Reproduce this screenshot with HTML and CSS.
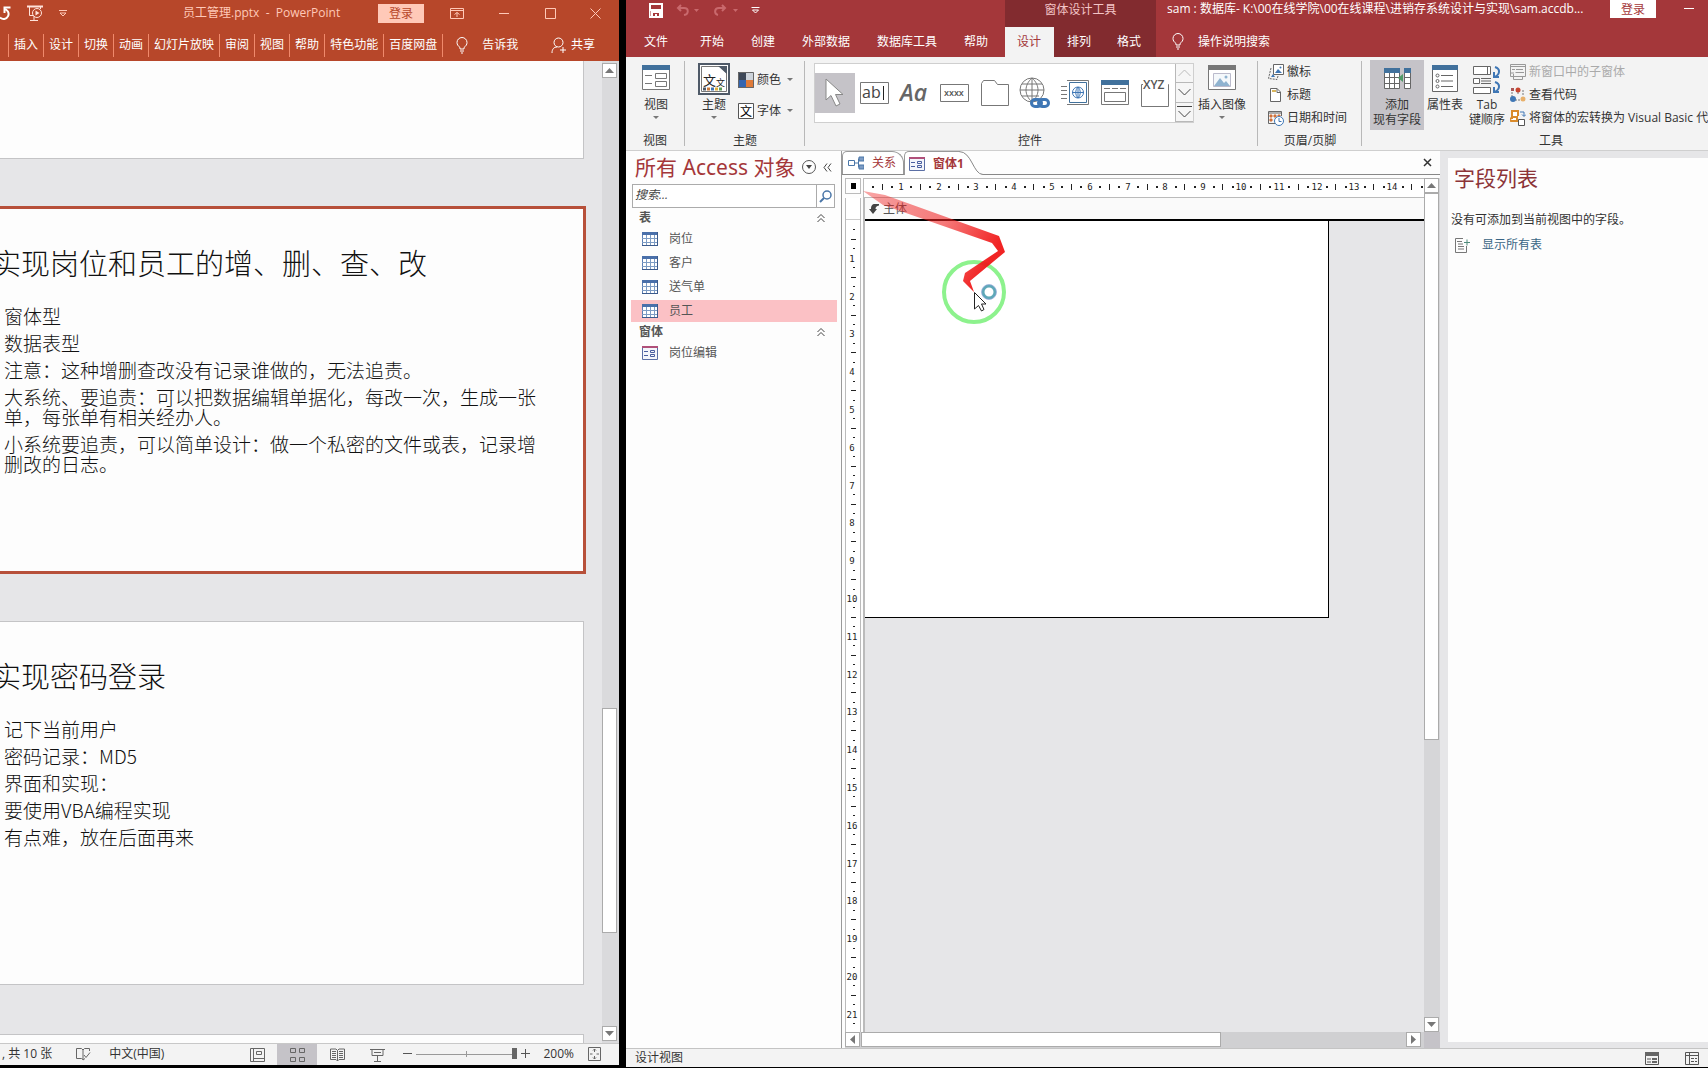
FILE: index.html
```html
<!DOCTYPE html>
<html lang="zh-CN">
<head>
<meta charset="utf-8">
<title>员工管理.pptx / sam 数据库</title>
<link rel="stylesheet" href="styles.css">
</head>
<body>
<div class="desktop">

<section class="ppt" aria-label="PowerPoint">
  <header class="ppt-head">
    <div class="ppt-title-row">
      <div class="ppt-qat">
        <button aria-label="重复"><svg width="12" height="16"><path d="M0 12.500A5 5 0 1 0 4 4M10.500 2.500H4.500V8" fill="none" stroke="#fff" stroke-width="2"/></svg></button>
        <button aria-label="放映"><svg width="16" height="16" fill="none" stroke="#ffe3da"><path d="M0 1.500H16" stroke-width="2"/><path d="M2.500 2V10.500H6M13.500 2V4M7 11V15M3 15.500H11"/><circle cx="10" cy="8" r="4.500"/><path d="M8.500 5.500V10.500L12.500 8Z" fill="#ffe3da" stroke="none"/></svg></button>
        <button aria-label="自定义"><svg width="10" height="8" fill="none" stroke="#ffc9b8"><path d="M1 1.500H9M2 4L5 7L8 4Z"/></svg></button>
      </div>
      <h1 class="ppt-title">员工管理.pptx&nbsp; -&nbsp; PowerPoint</h1>
      <button class="ppt-login">登录</button>
      <div class="ppt-win">
        <button aria-label="功能区显示选项"><svg width="14" height="11" fill="none" stroke="#ffc9b8"><path d="M.5.500H13.500V10.500H.5ZM.5 2.500H13.500M7 9V4.500M4.500 6.500L7 4.500L9.500 6.500"/></svg></button>
        <button aria-label="最小化"><svg width="12" height="11" stroke="#ffc9b8"><path d="M1 5.500H11"/></svg></button>
        <button aria-label="最大化"><svg width="11" height="11" fill="none" stroke="#ffc9b8"><path d="M.5.500H10.500V10.500H.5Z"/></svg></button>
        <button aria-label="关闭"><svg width="11" height="11" stroke="#ffc9b8"><path d="M.5.500L10.500 10.500M10.500.500L.5 10.500"/></svg></button>
      </div>
    </div>
    <nav class="ppt-tabs">
      <button class="cut" aria-label="绘图"></button><button>插入</button><button>设计</button><button>切换</button><button>动画</button><button>幻灯片放映</button><button>审阅</button><button>视图</button><button>帮助</button><button>特色功能</button><button>百度网盘</button>
      <button class="tell"><svg width="12" height="17" fill="none" stroke="#fff"><path d="M4 12V10.500C2 9 1 7.500 1 5.500A5 5 0 0 1 11 5.500C11 7.500 10 9 8 10.500V12ZM4 14H8M5 16H7"/></svg>告诉我</button>
      <button class="share"><svg width="16" height="17" fill="none" stroke="#fff"><circle cx="7.500" cy="5.500" r="4.500"/><path d="M1 16C1 12 3 10 6 10M9 13H15M12 10V16"/></svg>共享</button>
    </nav>
  </header>
  <main class="ppt-main">
    <div class="slides">
      <article class="slide slide-top"></article>
      <article class="slide selected">
        <h2>实现岗位和员工的增、删、查、改</h2>
        <p>窗体型</p>
        <p>数据表型</p>
        <p>注意：这种增删查改没有记录谁做的，无法追责。</p>
        <p>大系统、要追责：可以把数据编辑单据化，每改一次，生成一张<br>单，每张单有相关经办人。</p>
        <p>小系统要追责，可以简单设计：做一个私密的文件或表，记录增<br>删改的日志。</p>
      </article>
      <article class="slide">
        <h2>实现密码登录</h2>
        <p>记下当前用户</p>
        <p>密码记录：MD5</p>
        <p>界面和实现：</p>
        <p>要使用VBA编程实现</p>
        <p>有点难，放在后面再来</p>
      </article>
      <article class="slide"></article>
    </div>
    <div class="vbar ppt-bar">
      <button class="sbtn" aria-label="向上"><svg width="9" height="5"><path d="M0 5L4.500 0L9 5Z" fill="#777"/></svg></button>
      <div class="track"><div class="gap-a"></div><div class="thumb"></div><div class="gap-b"></div></div>
      <button class="sbtn" aria-label="向下"><svg width="9" height="5"><path d="M0 0L4.500 5L9 0Z" fill="#777"/></svg></button>
    </div>
  </main>
  <footer class="ppt-status">
    <span>, 共 10 张</span>
    <button class="spell" aria-label="拼写检查"><svg width="15" height="14" fill="none" stroke="#666"><path d="M7 12.500L5.500 11.500H.5V1.500H5.500L7 3L8.500 1.500H13.500V4M7 3V13L9 11.500M8 8L10 10.500L14 5.500"/></svg></button>
    <span>中文(中国)</span>
    <div class="views">
      <button aria-label="普通"><svg width="15" height="14" fill="none" stroke="#666"><path d="M.5.500H14.500V13.500H.5ZM3.500.500V13.500M3.500 10.500H14.500M6.500 3.500H11.500V6.500H6.500Z"/></svg></button>
      <button class="on" aria-label="幻灯片浏览"><svg width="15" height="14" fill="none" stroke="#666"><path d="M.5.500H5.500V4.500H.5ZM9.500.500H14.500V4.500H9.500ZM.5 9.500H5.500V13.500H.5ZM9.500 9.500H14.500V13.500H9.500Z"/></svg></button>
      <button aria-label="阅读"><svg width="15" height="14" fill="none" stroke="#666"><path d="M7.500 13V2.500L6 1H.5V11.500H6L7.500 13L9 11.500H14.500V1H9L7.500 2.500M2 3.500H6M2 5.500H6M2 7.500H6M2 9.500H6M9 3.500H13M9 5.500H13M9 7.500H13M9 9.500H13"/></svg></button>
      <button aria-label="放映"><svg width="15" height="14" fill="none" stroke="#666"><path d="M0 1.500H15M2 1.500V7.500H13V1.500M4 4.500H11M7.500 8V13M4 13.500H11"/></svg></button>
    </div>
    <button class="zbtn" aria-label="缩小"><svg width="9" height="9" stroke="#555"><path d="M0 4.500H9"/></svg></button>
    <input class="zoom" type="range" min="0" max="100" value="100" aria-label="缩放">
    <button class="zbtn" aria-label="放大"><svg width="9" height="9" stroke="#555"><path d="M0 4.500H9M4.500 0V9"/></svg></button>
    <span class="pct">200%</span>
    <button class="fit" aria-label="适应窗口"><svg width="13" height="14" fill="none" stroke="#666"><path d="M.5.500H12.500V13.500H.5ZM6.500 2V5M6.500 9V12M2 7H4.500M8.500 7H11M5 3.500L6.500 2L8 3.500M5 10.500L6.500 12L8 10.500"/></svg></button>
  </footer>
</section>

<section class="acc" aria-label="Access">
  <header class="acc-head">
    <div class="head-left">
      <div class="acc-qat">
        <button aria-label="保存"><svg width="14" height="15"><path d="M0 0H14V15H0Z" fill="#fff"/><path d="M2 2H12V6H2ZM4 10H10V13H8V11H6V13H4ZM1.500 8H2V13H1.500Z" fill="#a4373a"/></svg></button>
        <button class="dim" aria-label="撤消"><svg width="24" height="12" fill="none" stroke="#c9696d" stroke-width="2"><path d="M2 4H8C13 4 13 10 8 11M5 1L2 4L5 7"/><path d="M18 5H23L20.500 8Z" fill="#c9696d" stroke="none"/></svg></button>
        <button class="dim" aria-label="恢复"><svg width="25" height="12" fill="none" stroke="#c9696d" stroke-width="2"><path d="M12 4H6C1 4 1 10 5 11M9 1L12 4L9 7"/><path d="M20 5H25L22.500 8Z" fill="#c9696d" stroke="none"/></svg></button>
        <button aria-label="自定义"><svg width="9" height="8" fill="none" stroke="#fff"><path d="M.5 1.500H8.500M1.500 4L4.500 7L7.500 4Z"/></svg></button>
      </div>
      <nav class="acc-tabs"><button class="file">文件</button><button>开始</button><button>创建</button><button>外部数据</button><button>数据库工具</button><button>帮助</button></nav>
    </div>
    <div class="head-ctx">
      <div class="ctx-title">窗体设计工具</div>
      <nav class="acc-tabs"><button class="active">设计</button><button>排列</button><button>格式</button></nav>
    </div>
    <div class="head-right">
      <div class="acc-title-row">
        <h1>sam : 数据库- K:\00在线学院\00在线课程\进销存系统设计与实现\sam.accdb...</h1>
        <button class="acc-login">登录</button>
        <button class="acc-min" aria-label="最小化"><svg width="10" height="11" stroke="#fff"><path d="M0 4.500H10"/></svg></button>
      </div>
      <button class="acc-tell"><svg width="12" height="17" fill="none" stroke="#fff"><path d="M4 12V10.500C2 9 1 7.500 1 5.500A5 5 0 0 1 11 5.500C11 7.500 10 9 8 10.500V12ZM4 14H8M5 16H7"/></svg>操作说明搜索</button>
    </div>
  </header>

  <div class="ribbon">
    <div class="group g-view">
      <div class="gbody">
        <button class="big"><span class="ico"><svg width="28" height="26" fill="none" stroke="#777"><path d="M.5.500H27.500V24.500H.5Z" fill="#fff"/><path d="M0 0H28V5H0Z" fill="#41719c" stroke="none"/><path d="M3 10.500H10M13.500 8.500H24.500V13.500H13.500ZM3 18.500H10M13.500 16.500H24.500V21.500H13.500Z"/></svg></span>视图<i class="caret"></i></button>
      </div>
      <div class="glabel">视图</div>
    </div>
    <div class="group g-theme">
      <div class="gbody">
        <button class="big"><span class="ico"><svg width="32" height="32" fill="none"><path d="M1 1H31V31H1Z" fill="#fff" stroke="#4f5a68" stroke-width="2"/><path d="M3.500 3.500H22L28.500 10V28.500H3.500Z" stroke="#777"/><path d="M20 3H29V11Z" fill="#4f5a68"/><text x="5" y="22" font-size="13" fill="#222">文</text><text x="18" y="23" font-size="9" fill="#222">文</text><path d="M5 26H8" stroke="#4f5a68" stroke-width="3"/><path d="M9 26H12" stroke="#c97a3c" stroke-width="3"/><path d="M13 26H16" stroke="#3f77b5" stroke-width="3"/><path d="M17 26H20" stroke="#e0b03c" stroke-width="3"/><path d="M21 26H24" stroke="#5a9c5a" stroke-width="3"/></svg></span>主题<i class="caret"></i></button>
        <div class="stack two">
          <button class="small"><svg width="16" height="16"><path d="M0 0H8V8H0Z" fill="#3c4656"/><path d="M8 0H16V8H8Z" fill="#cdd3da"/><path d="M0 8H8V16H0Z" fill="#3465b0"/><path d="M8 8H16V16H8Z" fill="#e07b39"/><path d="M.5.500H15.500V15.500H.5Z" fill="none" stroke="#666"/></svg>颜色<i class="caret"></i></button>
          <button class="small"><svg width="16" height="16"><path d="M.5.500H15.500V15.500H.5Z" fill="#fff" stroke="#555"/><text x="2" y="13" font-size="12" fill="#000">文</text></svg>字体<i class="caret"></i></button>
        </div>
      </div>
      <div class="glabel">主题</div>
    </div>
    <div class="group g-ctl">
      <div class="gbody">
        <div class="gallery">
          <button class="on" aria-label="选择"><svg width="20" height="30"><path d="M1 1V22L6 17.500L11 28L15 26L10.500 16.500H18Z" fill="#fff" stroke="#888"/></svg></button>
          <button aria-label="文本框"><svg width="30" height="22"><path d="M.5.500H28.500V21.500H.5Z" fill="#fff" stroke="#777"/><text x="2" y="16" font-size="16" fill="#444">ab</text><path d="M23.500 4V18" stroke="#222"/></svg></button>
          <button aria-label="标签"><svg width="32" height="28"><text x="1" y="22" font-size="23" font-style="italic" font-weight="600" fill="#666">Aa</text></svg></button>
          <button aria-label="按钮"><svg width="30" height="18"><path d="M.5.500H28.500V17.500H.5Z" fill="#fff" stroke="#777"/><text x="4" y="12" font-size="9" font-weight="600" fill="#555">xxxx</text></svg></button>
          <button aria-label="选项卡控件"><svg width="28" height="26"><path d="M.5 25.500V3.500L2.500.500H13.500L16.500 4.500H27.500V25.500Z" fill="#fff" stroke="#777"/></svg></button>
          <button aria-label="超链接"><svg width="32" height="32" fill="none" stroke="#777"><circle cx="13" cy="13" r="12"/><path d="M13 1V25M1 13H25M3 7H23M3 19H20M13 1C5 8 5 18 13 25M13 1C21 8 21 18 13 25"/><g stroke="#3f77b5" stroke-width="3"><rect x="12.500" y="22.500" width="10" height="7" rx="3.500" fill="none"/><rect x="19.500" y="22.500" width="10" height="7" rx="3.500"/></g></svg></button>
          <button aria-label="Web 浏览器"><svg width="28" height="26" fill="none" stroke="#777"><path d="M8.500 2.500H25.500V22.500H8.500Z" stroke="#41719c"/><path d="M6 .5H27.500V24.500H6M0 6.500H6M0 10.500H6M0 14.500H6M0 18.500H6"/><g stroke="#3f77b5"><circle cx="17" cy="12.500" r="5.500"/><path d="M17 7V18M11 12.500H23M17 7C14 10 14 15 17 18M17 7C20 10 20 15 17 18"/></g></svg></button>
          <button aria-label="导航控件"><svg width="28" height="26" fill="none" stroke="#777"><path d="M.5.500H27.500V24.500H.5Z"/><path d="M0 0H28V5H0Z" fill="#41719c" stroke="none"/><path d="M3 8.500H9M11 8.500H17M19 8.500H25M3.500 12.500H24.500V21.500H3.500Z"/></svg></button>
          <button aria-label="选项组"><svg width="28" height="32"><path d="M2 7.500H.5V29.500H27.500V7.500H27" fill="none" stroke="#777"/><text x="2" y="12" font-size="12" font-weight="600" fill="#555">XYZ</text></svg></button>
          <div class="gscroll">
            <button aria-label="上一行"><svg width="13" height="8" fill="none" stroke="#bbb"><path d="M.5 7L6.500 1L12.500 7"/></svg></button>
            <button aria-label="下一行"><svg width="13" height="8" fill="none" stroke="#444"><path d="M.5 1L6.500 7L12.500 1"/></svg></button>
            <button aria-label="更多"><svg width="15" height="14" fill="none" stroke="#444"><path d="M0 1.500H15M1.500 6L7.500 12L13.500 6"/></svg></button>
          </div>
        </div>
        <button class="big insert"><span class="ico"><svg width="28" height="26" fill="none"><path d="M.5.500H27.500V24.500H.5Z" fill="#fff" stroke="#777"/><path d="M0 0H28V5H0Z" fill="#777"/><path d="M5.500 8.500H22.500V21.500H5.500Z" stroke="#bbc" fill="#f4f8fb"/><path d="M6 21L12 13L16 18L18 16L22 21Z" fill="#8fb3d0"/><circle cx="18" cy="12" r="1.500" fill="#8fb3d0"/></svg></span>插入图像<i class="caret"></i></button>
      </div>
      <div class="glabel">控件</div>
    </div>
    <div class="group g-hf">
      <div class="gbody">
        <div class="stack">
          <button class="small"><svg width="16" height="16" fill="none" stroke="#666"><path d="M5.500.500H15.500V10.500H5.500Z" fill="#fff"/><path d="M7 9L10 5L12 7L14 9Z" fill="#3f77b5" stroke="none"/><circle cx="12.500" cy="3.500" r="1" fill="#3f77b5" stroke="none"/><path d="M3 4L.5 14.500L9 15.500L10 12" stroke-dasharray="2 1"/><path d="M3 13L5 10L7 13Z" fill="#3f77b5" stroke="none"/></svg>徽标</button>
          <button class="small"><svg width="16" height="16" fill="none" stroke="#666"><path d="M2.500 1.500H9L12.500 5V14.500H2.500Z" fill="#fff"/><path d="M9 1.500V5.500H12.500"/><path d="M4 3H8V5H4Z" fill="#d8b45a" stroke="none"/></svg>标题</button>
          <button class="small"><svg width="16" height="16" fill="none" stroke="#666"><path d="M.5 1.500H13.500V6M.5 1.500V13.500H7M0 3H14"/><path d="M2 5H4V7H2ZM6 5H8V7H6ZM2 9H4V11H2ZM10 5H12V6H10Z" fill="#d0703a" stroke="#d0703a"/><circle cx="11" cy="11" r="4.500" fill="#fff" stroke="#3f77b5"/><path d="M11 8V11.500H13.500" stroke="#3f77b5"/></svg>日期和时间</button>
        </div>
      </div>
      <div class="glabel">页眉/页脚</div>
    </div>
    <div class="group g-tool">
      <div class="gbody">
        <button class="big pressed"><span class="ico"><svg width="27" height="22" fill="none" stroke="#666"><path d="M.5.500H15.500V20.500H.5ZM5.500 4V20M10.500 4V20M0 9.500H16M0 15.500H16" fill="#fff"/><path d="M0 0H16V5H0Z" fill="#41719c" stroke="none"/><path d="M20.500.500H26.500V20.500H20.500ZM20 9.500H27M20 15.500H27" fill="#fff"/><path d="M20 0H27V5H20Z" fill="#41719c" stroke="none"/><path d="M14 10L19 6V14Z" fill="#4f9a66" stroke="none"/></svg></span>添加<br>现有字段</button>
        <button class="big"><span class="ico"><svg width="26" height="28" fill="none" stroke="#666"><path d="M.5.500H25.500V26.500H.5Z" fill="#fff"/><path d="M0 0H26V5H0Z" fill="#41719c" stroke="none"/><circle cx="5.500" cy="10.500" r="1.500"/><circle cx="5.500" cy="16" r="1.500"/><circle cx="5.500" cy="21.500" r="1.500"/><path d="M9 10.500H21M9 16H21M9 21.500H21"/></svg></span>属性表</button>
        <button class="big tab"><span class="ico"><svg width="28" height="30" fill="none" stroke="#666"><path d="M.5 1.500H17.500V9.500H.5ZM14.500 1.500V9.500M.5 13.500H6.500V18.500H.5ZM8 13.500H18M8 16H18M8 18.500H18M.5 22.500H17.500V28.500H.5Z" fill="#fff"/><g stroke="#3f77b5" stroke-width="2"><path d="M22 2C28 4 27 10 21 12M21 7V12H26M22 17C28 19 27 25 21 27M21 22V27H26"/></g></svg></span>Tab<br>键顺序</button>
        <div class="stack">
          <button class="small" disabled><svg width="16" height="16" fill="none" stroke="#999"><path d="M.5.500H15.500V12.500H.5ZM0 2.500H16M2 5.500H5M6 5.500H13M5.500 8.500H14M0 9H4M3.500 10V15.500H12.500V13"/></svg>新窗口中的子窗体</button>
          <button class="small"><svg width="16" height="16"><path d="M2 5V11M5 13H11M8 5V8M13 3V9" stroke="#777" stroke-dasharray="2 1"/><circle cx="8" cy="3" r="2.500" fill="#c8452f"/><circle cx="3" cy="12" r="3" fill="#3f77b5"/><circle cx="13" cy="12" r="2.500" fill="#e8b06a"/><path d="M1 1H4V4H1Z" fill="#a55"/></svg>查看代码</button>
          <button class="small"><svg width="16" height="16" fill="none"><path d="M2 9V1H8V6M0 9L3 7H7V11H1Z" fill="#fff" stroke="#d98a2b" stroke-width="2"/><path d="M10 2H14V6M12 4.500L14 6.500L16 4.500" stroke="#3f77b5"/><path d="M8.500 9.500H14.500V15.500H8.500Z" fill="#fff" stroke="#555"/></svg>将窗体的宏转换为 Visual Basic 代码</button>
        </div>
      </div>
      <div class="glabel">工具</div>
    </div>
  </div>

  <div class="acc-body">
    <aside class="nav">
      <div class="nav-head"><h2>所有 Access 对象</h2>
        <button aria-label="选择类别"><svg width="14" height="14"><circle cx="7" cy="7" r="6.500" fill="none" stroke="#555"/><path d="M4 5H10L7 9Z" fill="#444"/></svg></button>
        <button class="fold" aria-label="折叠"><svg width="9" height="9" fill="none" stroke="#444"><path d="M4 .5L1 4.500L4 8.500M8 .5L5 4.500L8 8.500"/></svg></button>
      </div>
      <div class="search"><input type="text" placeholder="搜索..." aria-label="搜索"><button aria-label="搜索"><svg width="13" height="13" fill="none" stroke="#4a76a8"><circle cx="8" cy="5" r="4" stroke-width="1.500"/><path d="M5 8L1 12" stroke-width="2"/></svg></button></div>
      <button class="cat">表<svg width="8" height="9" fill="none" stroke="#444"><path d="M.5 4L4 .5L7.500 4M.5 8L4 4.500L7.500 8"/></svg></button>
      <ul>
        <li><button><svg class="tbl"><use href="#i-table"/></svg>岗位</button></li>
        <li><button><svg class="tbl"><use href="#i-table"/></svg>客户</button></li>
        <li><button><svg class="tbl"><use href="#i-table"/></svg>送气单</button></li>
        <li><button class="on"><svg class="tbl"><use href="#i-table"/></svg>员工</button></li>
      </ul>
      <button class="cat">窗体<svg width="8" height="9" fill="none" stroke="#444"><path d="M.5 4L4 .5L7.500 4M.5 8L4 4.500L7.500 8"/></svg></button>
      <ul><li><button><svg class="tbl"><use href="#i-form"/></svg>岗位编辑</button></li></ul>
    </aside>

    <main class="doc">
      <div class="doc-tabs">
        <button class="dtab"><svg width="16" height="14" fill="none" stroke="#4a76a8"><path d="M.5 4.500H6.500V9.500H.5ZM7 7H10.500V2.500M10.500 7V11.500"/><path d="M11 1H16V5H11ZM11 9H16V13H11Z" fill="#7d9cc4" stroke="#4a76a8"/></svg>关系</button>
        <button class="dtab cur"><svg class="tbl"><use href="#i-form"/></svg><span>窗体1</span><svg class="slope" width="24" height="24"><path d="M0 .5C13 .5 14 23.500 24 23.500V24H0Z" fill="#fff"/><path d="M0 .5C13 .5 14 23.500 24 23.500" fill="none" stroke="#888"/></svg></button>
        <button class="dclose" aria-label="关闭"><svg width="9" height="9" stroke="#333" stroke-width="1.500"><path d="M1 1L8 8M8 1L1 8"/></svg></button>
      </div>
      <div class="design">
        <button class="corner" aria-label="窗体选择器"></button>
        <svg class="ruler-h" id="rulerH"></svg>
        <div class="ruler-col"><div class="sec-sel"></div><svg class="ruler-v" id="rulerV"></svg></div>
        <div class="canvas">
          <div class="sec-head"><svg width="10" height="10"><path d="M0 5L4 10L8 5H6.500C6.500 3 7.500 2 10 1.500V0H6C3 0 2 2 2 5Z" fill="#444"/></svg>主体</div>
          <div class="form-page"></div>
        </div>
        <div class="vbar">
          <button class="sbtn" aria-label="向上"><svg width="9" height="5"><path d="M0 5L4.500 0L9 5Z" fill="#777"/></svg></button>
          <div class="track"><div class="thumb t-doc"></div><div class="rest-doc"></div></div>
          <button class="sbtn" aria-label="向下"><svg width="9" height="5"><path d="M0 0L4.500 5L9 0Z" fill="#777"/></svg></button>
        </div>
        <div class="hbar">
          <button class="sbtn" aria-label="向左"><svg width="5" height="9"><path d="M5 0L0 4.500L5 9Z" fill="#777"/></svg></button>
          <div class="track"><div class="thumb"></div><div class="rest"></div></div>
          <button class="sbtn" aria-label="向右"><svg width="5" height="9"><path d="M0 0L5 4.500L0 9Z" fill="#777"/></svg></button>
        </div>
        <div class="bar-corner"></div>
      </div>
    </main>

    <aside class="fields">
      <div class="fields-in">
        <h2>字段列表</h2>
        <p>没有可添加到当前视图中的字段。</p>
        <a href="#"><svg width="15" height="15" fill="none" stroke="#777"><path d="M8 .5H.5V14.500H11.500V8M3 3.500H7M3 6H8M3 8.500H9M3 11H9M2 3.500H3"/><path d="M9 4.500H15M12 1.500V7.500" stroke="#4f8a7a"/></svg>显示所有表</a>
      </div>
    </aside>
  </div>

  <footer class="acc-status"><span>设计视图</span>
    <button aria-label="窗体视图"><svg width="14" height="13" fill="none" stroke="#555"><path d="M.5.500H13.500V12.500H.5ZM2 7H6M2 10H6"/><path d="M0 0H14V4H0ZM7 6H12V8H7ZM7 9H12V11H7Z" fill="#666" stroke="none"/></svg></button>
    <button aria-label="布局视图"><svg width="14" height="13" fill="none" stroke="#555"><path d="M.5.500H13.500V12.500H.5ZM0 3.500H14M4.500 0V13M6 6.500H9M10 6.500H12M6 9.500H9M10 9.500H12"/></svg></button>
  </footer>
</section>
</div>

<svg class="pointer" width="160" height="150" viewBox="860 185 160 150">
  <defs><linearGradient id="trail" gradientUnits="userSpaceOnUse" x1="863" y1="190" x2="990" y2="260"><stop offset="0" stop-color="#f02020" stop-opacity=".4"/><stop offset=".6" stop-color="#f02020" stop-opacity=".6"/><stop offset="1" stop-color="#f01818" stop-opacity=".95"/></linearGradient></defs>
  <circle cx="974" cy="292" r="30" fill="none" stroke="#8df28d" stroke-width="4"/>
  <path d="M863 191L885 195L999 236L1005 252L970 281L974 292L963 281L965 273L998 251L992 243L883 205Z" fill="url(#trail)"/>
  <circle cx="989" cy="292" r="6" fill="none" stroke="#5fa8b8" stroke-width="3"/>
  <circle cx="989" cy="292" r="7.500" fill="none" stroke="#9ad" stroke-width=".7"/>
  <path d="M974.500 292.500V309L978.500 305.500L981.500 311L984 309.500L981.500 304H986Z" fill="#fff" stroke="#222"/>
</svg>

<svg width="0" height="0" class="defs">
  <symbol id="i-table" viewBox="0 0 16 14"><path d="M.5.500H15.500V13.500H.5Z" fill="#fff" stroke="#5b7fb5"/><path d="M0 0H16V3H0Z" fill="#4a70aa"/><path d="M0 6.500H16M0 10.500H16M4.500 3V14M8.500 3V14M12.500 3V14" stroke="#7d9cc4"/><path d="M0 13.500H16M15.500 0V14" stroke="#3b5a8c"/></symbol>
  <symbol id="i-form" viewBox="0 0 16 14"><path d="M.5.500H15.500V13.500H.5Z" fill="#f4f6fb" stroke="#5b6fa5"/><path d="M0 0H16V2H0Z" fill="#b0507a"/><path d="M2 5.500H6M2 9.500H6M8.500 4.500H12.500V6.500H8.500ZM8.500 8.500H12.500V10.500H8.500Z" stroke="#4a5fa0" fill="none"/></symbol>
</svg>
<script src="ruler.js"></script>
</body>
</html>
```
FILE: styles.css
```css
* { box-sizing: border-box; }
body {
  margin: 0;
  background: #000;
  color: #333;
  font: 12px/16px "Open Sans", "Noto Sans CJK SC", sans-serif;
  overflow: hidden;
}
button {
  margin: 0; padding: 0; border: 0;
  background: none; color: inherit; font: inherit; white-space: nowrap;
}
h1, h2, p, ul { margin: 0; padding: 0; font-weight: 400; }
ul { list-style: none; }
svg { display: block; flex: none; }
.defs { position: absolute; }

.desktop {
  display: grid;
  grid-template-columns: minmax(0, 619fr) 7px minmax(0, 1082fr);
  height: 100vh;
}

/* PowerPoint */
.ppt { grid-column: 1; display: flex; flex-direction: column; min-height: 0; padding-bottom: 3px; overflow: hidden; }
.ppt-head { height: 61px; flex: none; background: #b7472a; color: #fff; }
.ppt-title-row { display: flex; align-items: center; height: 26px; }
.ppt-qat { display: flex; align-items: center; gap: 15px; width: 183px; }
.ppt-title { flex: 1; font-size: 12px; line-height: 16px; color: #ffc9b8; white-space: nowrap; }
.ppt-login { width: 46px; height: 19px; background: #ffc9b8; color: #b7472a; line-height: 19px; }
.ppt-win { display: flex; justify-content: space-between; align-items: center; width: 151px; margin: 0 18px 0 26px; }
.ppt-tabs { display: flex; align-items: center; height: 38px; }
.ppt-tabs button { padding: 0 5px; height: 23px; border-right: 1px solid #f08a6c; line-height: 22px; }
.ppt-tabs .cut { width: 9px; padding: 0; }
.ppt-tabs .tell, .ppt-tabs .share { display: flex; align-items: center; border: 0; }
.ppt-tabs .tell { gap: 14px; padding: 0 13px; }
.ppt-tabs .share { gap: 4px; margin-left: auto; padding: 0 24px 0 0; }

.ppt-main { flex: 1; display: flex; min-height: 0; overflow: hidden; background: #e6e6e8; }
.slides { flex: 1; display: flex; flex-direction: column; gap: 49px; padding-right: 18px; overflow: hidden; }
.slide {
  flex: none; height: 364px; margin-left: -12px; padding: 33px 0 0 15px;
  background: #fdfdfd; border: 1px solid #c4c4c6;
  color: #111;
}
.slide-top { height: 98px; border-top: 0; }
.selected { border-color: #fdfdfd; outline: 3px solid #b7503a; outline-offset: -1px; }
.slide h2 { margin: 0 0 24px -12px; font: 300 29px/40px "Noto Sans CJK SC", sans-serif; white-space: nowrap; }
.slide p { margin-bottom: 7px; font: 300 19px/20px "Noto Sans CJK SC", sans-serif; white-space: nowrap; }

.vbar { display: flex; flex-direction: column; width: 16px; background: #d6d6d8; }
.sbtn { display: flex; align-items: center; justify-content: center; flex: none; width: 15px; height: 15px; background: #fff; border: 1px solid #ababab; }
.thumb { background: #fff; border: 1px solid #ababab; }
.vbar .track { flex: 1; display: flex; flex-direction: column; width: 15px; }
.ppt-bar { width: 17px; padding: 2px 0; background: #dadadc; }
.gap-a { flex: 631; }
.ppt-bar .thumb { flex: 224; }
.gap-b { flex: 93; }

.ppt-status { display: flex; align-items: center; flex: none; height: 22px; padding: 0 18px 2px 2px; background: #f3f3f3; border-top: 1px solid #c8c8c8; white-space: nowrap; }
.spell { margin: 0 18px 0 24px; }
.views { display: flex; align-self: stretch; margin: 0 0 -2px auto; }
.views button { display: flex; align-items: center; justify-content: center; width: 40px; }
.views .on { background: #c5c3c8; }
.zbtn { margin-left: 6px; }
.zoom { appearance: none; width: 101px; height: 12px; margin: 0 0 0 4px; background: linear-gradient(#999, #999) 0 6px / 100% 1px no-repeat, linear-gradient(#999, #999) 50% 50% / 1px 6px no-repeat; }
.zoom::-webkit-slider-thumb { appearance: none; width: 5px; height: 11px; background: #666; }
.zoom + .zbtn { margin-left: 4px; }
.pct { margin: 0 14px 0 13px; }

/* Access */
.acc { grid-column: 3; display: flex; flex-direction: column; min-height: 0; padding-bottom: 1px; overflow: hidden; }
.acc-head { display: flex; flex: none; height: 57px; background: #a4373a; color: #fff; }
.head-left { width: 379px; flex: none; }
.acc-qat { display: flex; align-items: center; gap: 13px; height: 27px; padding: 0 0 7px 23px; }
.acc-tabs { display: flex; gap: 1px; height: 30px; }
.head-left .acc-tabs { padding-left: 5px; }
.acc-tabs button { padding: 0 13px 1px; }
.acc-tabs .file { margin-right: 5px; }
.head-ctx { flex: none; width: 151px; background: #822b2f; }
.head-ctx .acc-tabs { gap: 1px; }
.head-ctx .acc-tabs button { padding: 0 13px 1px 12px; }
.ctx-title { height: 27px; line-height: 19px; text-align: center; color: #f3c4c6; }
.acc-tabs .active { background: #f3f3f3; color: #a4373a; }
.head-right { flex: 1; min-width: 0; padding: 0 14px 0 11px; }
.acc-title-row { display: flex; align-items: flex-start; height: 33px; }
.acc-title-row h1 { flex: 1; min-width: 0; overflow: hidden; font-size: 12px; line-height: 18px; white-space: nowrap; }
.acc-login { width: 46px; height: 18px; margin: 0 28px 0 12px; background: #fff; color: #a4373a; line-height: 17px; }
.acc-min { padding-top: 4px; }
.acc-tell { display: flex; align-items: center; gap: 14px; padding-left: 5px; height: 17px; }

.ribbon { display: flex; flex: none; height: 94px; background: #f3f3f3; border-bottom: 1px solid #cfcfcf; overflow: hidden; color: #333; }
.group { position: relative; flex: none; padding-top: 3px; }
.group::after { content: ""; position: absolute; right: 0; top: 4px; bottom: 4px; width: 1px; background: #b8b8b8; }
.g-tool::after { display: none; }
.gbody { display: flex; height: 73px; }
.glabel { text-align: center; line-height: 16px; }
.g-view { width: 59px; padding-left: 2px; }
.g-view .glabel { padding-right: 3px; }
.g-theme { width: 120px; }
.g-ctl { width: 453px; }
.g-ctl .glabel { padding-right: 3px; }
.g-hf { width: 104px; }
.g-tool { width: 378px; }
.big { display: flex; flex-direction: column; align-items: center; justify-content: flex-start; width: 56px; padding-top: 5px; line-height: 15px; text-align: center; }
.big .ico { display: flex; align-items: flex-start; height: 32px; }
.caret { display: block; width: 0; margin: 4px auto 0; border: 3px solid transparent; border-top-color: #777; border-bottom: 0; }
.g-theme .big { width: 32px; margin-left: 13px; padding-top: 3px; }
.g-theme .big .ico { height: 34px; }
.stack { display: flex; flex-direction: column; }
.small { display: flex; align-items: center; gap: 3px; height: 23px; }
.small:disabled { color: #aaa; }
.two { margin-left: 8px; padding-top: 4px; }
.two .small { height: 31px; }
.two .caret { margin: 0 0 0 3px; }
.g-hf .stack { margin-left: 10px; }
.gallery { display: flex; align-items: center; height: 60px; margin: 3px 0 0 9px; background: #fff; border: 1px solid #cfcfcf; }
.gallery > button { display: flex; align-items: center; justify-content: center; width: 40px; height: 40px; }
.gallery .on { background: #c5c3c8; }
.gscroll { display: flex; flex-direction: column; align-self: stretch; width: 18px; }
.gscroll button { flex: 1; display: flex; align-items: center; justify-content: center; border: 1px solid #b8b8b8; border-width: 0 0 1px 1px; background: #f6f6f6; }
.insert { width: 56px; }
.g-tool .big { width: 42px; }
.g-tool .pressed { width: 54px; height: 70px; margin-left: 8px; background: #c5c3c8; }
.pressed .ico { padding-top: 3px; }
.g-tool .stack { margin-left: 2px; }

.acc-body { flex: 1; display: flex; min-height: 0; background: #e6e6e8; }
.nav { flex: none; width: 216px; padding: 4px 4px 0 5px; background: #fdfdfd; border-right: 1px solid #999; color: #555; }
.nav-head { display: flex; align-items: center; height: 24px; padding-left: 4px; }
.nav-head h2 { width: 167px; font: 21px/22px "Noto Sans", "Noto Sans CJK SC", sans-serif; color: #a4373a; white-space: nowrap; }
.fold { margin-left: 7px; }
.search { display: flex; height: 24px; margin: 5px 0 0 1px; width: 203px; border: 1px solid #ababab; background: #fff; }
.search input { flex: 1; min-width: 0; padding: 0 2px 3px; border: 0; outline: 0; background: none; font: italic 12px/16px "Open Sans", "Noto Sans CJK SC", sans-serif; color: #444; }
.search input::placeholder { color: #444; opacity: 1; }
.search button { width: 18px; padding-left: 2px; border-left: 1px solid #ababab; }
.cat { display: flex; align-items: center; justify-content: space-between; width: 100%; height: 20px; padding: 0 12px 0 8px; font-weight: 600; }
.nav ul { display: flex; flex-direction: column; gap: 2px; }
.nav ul button { display: flex; align-items: center; gap: 11px; width: 100%; height: 22px; padding-left: 11px; }
.nav ul .on { background: #fbc1c5; }
.tbl { width: 16px; height: 14px; }

.doc { flex: 1; display: flex; flex-direction: column; min-width: 0; background: #fdfdfd; }
.doc-tabs { display: flex; flex: none; height: 24px; border-bottom: 1px solid #888; color: #a4373a; }
.dtab { display: flex; align-items: center; gap: 8px; width: 62px; height: 23px; padding-left: 5px; border: 1px solid #999; border-bottom: 0; border-radius: 5px 12px 0 0; background: #fff; }
.cur { position: relative; width: 55px; height: 24px; border-right: 0; border-radius: 5px 0 0 0; font-weight: 700; padding-left: 4px; }
.cur span { position: relative; z-index: 1; }
.slope { position: absolute; left: 54px; top: -1px; }
.dclose { margin-left: auto; padding-right: 8px; }
.design {
  flex: 1; display: grid; min-height: 0; padding: 3px 0 0 3px;
  grid-template-columns: 16px minmax(0, 1fr) 16px;
  grid-template-rows: 20px minmax(0, 1fr) 16px;
}
.corner { width: 16px; height: 16px; border: 1px solid #bbb; background: linear-gradient(#000, #000) center / 5px 6px no-repeat; }
.ruler-h { justify-self: end; width: calc(100% - 2px); height: 20px; border: 1px solid #bbb; border-width: 1px 0 1px 1px; background: #fff; }
.ruler-h text, .ruler-v text { font: 9px "DejaVu Sans Mono", monospace; text-anchor: middle; fill: #222; }
.ruler-col { grid-row: 2; display: flex; flex-direction: column; border: 1px solid #bbb; border-width: 0 1px; background: #fff; overflow: hidden; }
.sec-sel { flex: none; height: 22px; border-bottom: 1px solid #ccc; }
.ruler-v { flex: 1; width: 14px; min-height: 0; }
.canvas { grid-row: 2; margin-left: 2px; border-left: 2px solid #bbb; background: #e6e6e8; overflow: hidden; }
.sec-head { display: flex; align-items: center; gap: 4px; height: 23px; padding-left: 4px; border-bottom: 2px solid #000; background: #fafafa; color: #555; }
.form-page { width: 83%; height: 397px; background: #fff; border: 1px solid #000; border-width: 0 1px 1px 0; }
.design .vbar { grid-column: 3; grid-row: 1 / 3; }
.t-doc { flex: 546; }
.rest-doc { flex: 278; }
.hbar { grid-column: 1 / 3; display: flex; background: #d0d0d2; }
.hbar .track { flex: 1; display: flex; height: 15px; margin: 0 3px 0 1px; }
.hbar .thumb { flex: 361; }
.hbar .rest { flex: 183; }
.hbar .sbtn:last-child { margin-right: 3px; }
.bar-corner { background: #c5c3c8; }

.fields { flex: none; width: 268px; padding: 7px 0 6px 8px; }
.fields-in { height: 100%; padding: 7px 3px; background: #fdfdfd; }
.fields h2 { padding-left: 3px; font-size: 21px; line-height: 26px; color: #8c3438; }
.fields p { margin: 21px 0 9px; line-height: 16px; white-space: nowrap; }
.fields a { display: flex; align-items: center; gap: 12px; padding-left: 4px; color: #3a6585; text-decoration: none; }

.acc-status { display: flex; align-items: center; flex: none; height: 19px; padding: 0 9px; background: #f3f3f3; border-top: 1px solid #c4c4c4; }
.acc-status span { flex: 1; }
.acc-status button { margin-left: 26px; }

.pointer { position: absolute; left: 860px; top: 185px; }
```
FILE: ruler.js
```js
// Centimetre rulers: a number per centimetre, a bar at the half, dots at the quarters.
const CM = 37.8;

function tick(x, y, w, h) {
  return `<rect x="${x}" y="${y}" width="${w}" height="${h}" fill="#222"/>`;
}

function draw(id, horizontal) {
  const svg = document.getElementById(id);
  const box = svg.getBoundingClientRect();
  const length = horizontal ? box.width : box.height;
  let out = "";
  for (let i = 0; i * CM < length; i++) {
    const at = (f) => Math.round((i + f) * CM) - (horizontal ? 1 : 0);
    if (horizontal) {
      out += tick(at(0.25), 7, 2, 2) + tick(at(0.5), 5, 1, 6) + tick(at(0.75), 7, 2, 2);
    } else {
      out += tick(7, at(0.25), 2, 1) + tick(5, at(0.5), 5, 1) + tick(7, at(0.75), 2, 1);
    }
    if (at(1) + 8 < length) {
      out += horizontal
        ? `<text x="${at(1)}" y="11">${i + 1}</text>`
        : `<text x="6" y="${at(1) + 4}">${i + 1}</text>`;
    }
  }
  svg.innerHTML = out;
}

draw("rulerH", true);
draw("rulerV", false);
```
